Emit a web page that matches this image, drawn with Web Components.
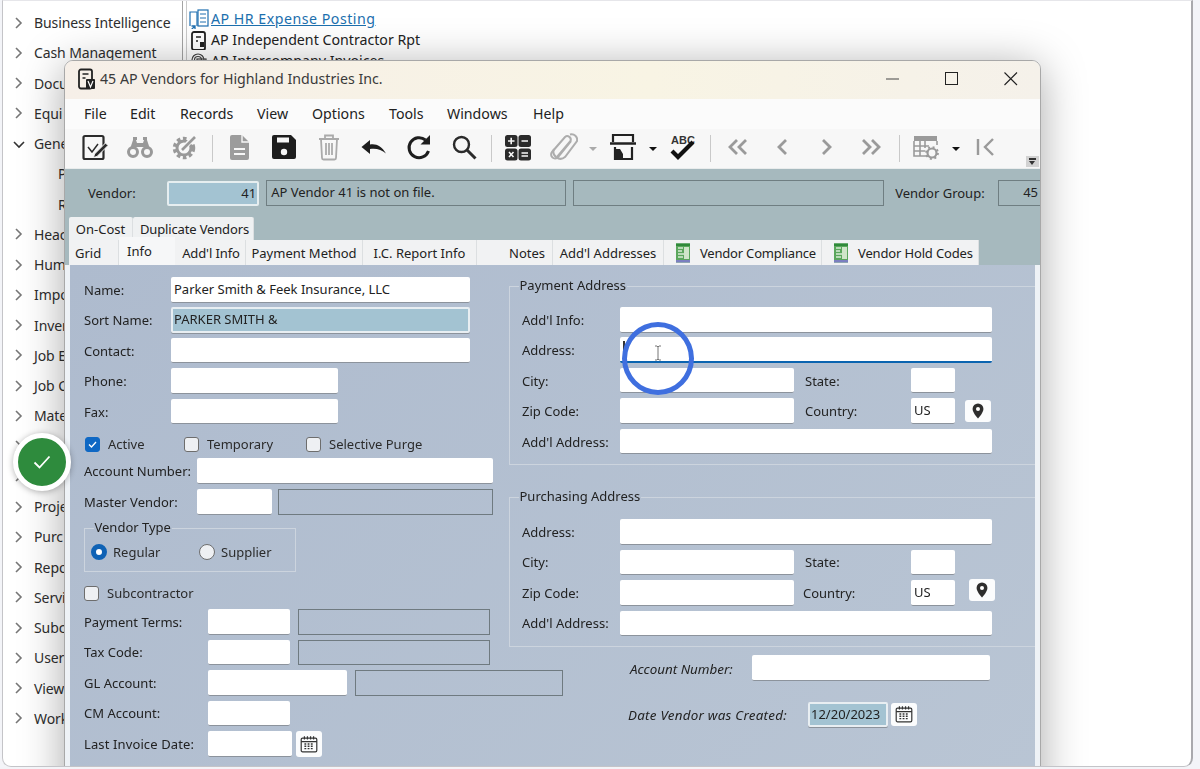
<!DOCTYPE html>
<html>
<head>
<meta charset="utf-8">
<style>
    html,body{margin:0;height:769px;overflow:hidden;background:#f3f4f8;font-family:"Noto Sans","Open Sans",sans-serif;}
</style>
</head>
<body>
<app-stage>
    <tree-list>
        <tree-item wide>Business Intelligence</tree-item>
        <tree-item wide>Cash Management</tree-item>
        <tree-item>Docu</tree-item>
        <tree-item>Equi</tree-item>
        <tree-item open>Gene</tree-item>
        <tree-item leaf>P</tree-item>
        <tree-item leaf>R</tree-item>
        <tree-item>Heac</tree-item>
        <tree-item>Hum</tree-item>
        <tree-item>Impo</tree-item>
        <tree-item>Inver</tree-item>
        <tree-item>Job E</tree-item>
        <tree-item>Job C</tree-item>
        <tree-item>Mate</tree-item>
        <tree-item></tree-item>
        <tree-item></tree-item>
        <tree-item>Proje</tree-item>
        <tree-item>Purc</tree-item>
        <tree-item>Repo</tree-item>
        <tree-item>Servi</tree-item>
        <tree-item>Subc</tree-item>
        <tree-item>User</tree-item>
        <tree-item>View</tree-item>
        <tree-item>Work</tree-item>
    </tree-list>
    <prog-list>
        <prog-item kind="hr" link>AP HR Expense Posting</prog-item>
        <prog-item kind="rpt">AP Independent Contractor Rpt</prog-item>
        <prog-item kind="inv">AP Intercompany Invoices</prog-item>
    </prog-list>

    <app-window title="45 AP Vendors for Highland Industries Inc.">
        <vendor-head></vendor-head>
        <tab-rows></tab-rows>
        <vendor-form>
            <form-col>
                <form-row><form-lbl style="--w:87px">Name:</form-lbl><form-field style="--w:299px">Parker Smith &amp; Feek Insurance, LLC</form-field></form-row>
                <form-row gap><form-lbl style="--w:87px">Sort Name:</form-lbl><form-field kind="teal" style="--w:299px">PARKER SMITH &amp;</form-field></form-row>
                <form-row gap><form-lbl style="--w:87px">Contact:</form-lbl><form-field style="--w:299px"></form-field></form-row>
                <form-row gap><form-lbl style="--w:87px">Phone:</form-lbl><form-field style="--w:167px"></form-field></form-row>
                <form-row gap><form-lbl style="--w:87px">Fax:</form-lbl><form-field style="--w:167px"></form-field></form-row>
                <form-row style="margin-top:10px;height:20px">
                    <form-check checked style="--w:99px;margin-left:1px">Active</form-check>
                    <form-check style="--w:122px">Temporary</form-check>
                    <form-check style="--w:160px">Selective Purge</form-check>
                </form-row>
                <form-row style="margin-top:4px"><form-lbl style="--w:113px">Account Number:</form-lbl><form-field style="--w:296px"></form-field></form-row>
                <form-row style="margin-top:5.5px"><form-lbl style="--w:113px">Master Vendor:</form-lbl><form-field style="--w:75px"></form-field><form-field kind="display" style="--w:215px;margin-left:6px"></form-field></form-row>
                <form-group legend="Vendor Type" style="--w:212px;--top:5px;--bottom:9px;--left:6px;margin-top:4.5px">
                    <form-row style="height:20px">
                        <form-radio checked style="--w:108px">Regular</form-radio>
                        <form-radio style="--w:90px">Supplier</form-radio>
                    </form-row>
                </form-group>
                <form-row style="margin-top:11px;height:20px"><form-check style="--w:140px">Subcontractor</form-check></form-row>
                <form-row style="margin-top:6px"><form-lbl style="--w:124px">Payment Terms:</form-lbl><form-field style="--w:82px"></form-field><form-field kind="display" style="--w:192px;margin-left:8px"></form-field></form-row>
                <form-row gap><form-lbl style="--w:124px">Tax Code:</form-lbl><form-field style="--w:82px"></form-field><form-field kind="display" style="--w:192px;margin-left:8px"></form-field></form-row>
                <form-row gap><form-lbl style="--w:124px">GL Account:</form-lbl><form-field style="--w:139px"></form-field><form-field kind="display" style="--w:208px;margin-left:8px"></form-field></form-row>
                <form-row gap><form-lbl style="--w:124px">CM Account:</form-lbl><form-field style="--w:82px"></form-field></form-row>
                <form-row gap><form-lbl style="--w:124px;letter-spacing:.12px">Last Invoice Date:</form-lbl><form-field style="--w:84px"></form-field><icon-btn icon="cal" style="margin-left:4px"></icon-btn></form-row>
            </form-col>
            <form-col>
                <form-group legend="Payment Address" style="--w:540px;--top:12px;--bottom:10px;--left:12px">
                    <form-row><form-lbl style="--w:98px">Add'l Info:</form-lbl><form-field style="--w:372px"></form-field></form-row>
                    <form-row gap><form-lbl style="--w:98px">Address:</form-lbl><form-field kind="focus" style="--w:372px"><text-caret></text-caret></form-field></form-row>
                    <form-row gap><form-lbl style="--w:98px">City:</form-lbl><form-field style="--w:174px"></form-field><form-lbl style="--w:106px;margin-left:11px">State:</form-lbl><form-field style="--w:44px"></form-field></form-row>
                    <form-row gap><form-lbl style="--w:98px">Zip Code:</form-lbl><form-field style="--w:174px"></form-field><form-lbl style="--w:106px;margin-left:11px">Country:</form-lbl><form-field style="--w:44px">US</form-field><icon-btn icon="pin" style="margin-left:10px;--h:22px"></icon-btn></form-row>
                    <form-row gap><form-lbl style="--w:98px">Add'l Address:</form-lbl><form-field style="--w:372px"></form-field></form-row>
                </form-group>
                <form-group legend="Purchasing Address" style="--w:540px;--top:13px;--bottom:10px;--left:12px;margin-top:23px">
                    <form-row><form-lbl style="--w:98px">Address:</form-lbl><form-field style="--w:372px"></form-field></form-row>
                    <form-row gap><form-lbl style="--w:98px">City:</form-lbl><form-field style="--w:174px"></form-field><form-lbl style="--w:106px;margin-left:11px">State:</form-lbl><form-field style="--w:44px"></form-field></form-row>
                    <form-row gap><form-lbl style="--w:98px">Zip Code:</form-lbl><form-field style="--w:174px"></form-field><form-lbl style="--w:108px;margin-left:9px">Country:</form-lbl><form-field style="--w:44px">US</form-field><icon-btn icon="pin" style="margin:-5px 0 0 14px;--h:22px"></icon-btn></form-row>
                    <form-row gap><form-lbl style="--w:98px">Add'l Address:</form-lbl><form-field style="--w:372px"></form-field></form-row>
                </form-group>
                <form-row style="margin:8px 0 0 121px"><form-lbl em style="--w:122px">Account Number:</form-lbl><form-field style="--w:238px"></form-field></form-row>
                <form-row style="margin:21px 0 0 119px"><form-lbl em style="--w:180px;letter-spacing:.25px">Date Vendor was Created:</form-lbl><form-field kind="teal" style="--w:80px">12/20/2023</form-field><icon-btn icon="cal" style="margin-left:3px;--h:23px"></icon-btn></form-row>
            </form-col>
        </vendor-form>
    </app-window>

    <done-badge></done-badge>
    <focus-ring></focus-ring>
</app-stage>

<script>
    const ICONS = {
        edit: '<rect x="3.5" y="4" width="20" height="23" rx="1.5" fill="none" stroke="#2b2b2b" stroke-width="2.2"/><path d="M8 15l4 5 6-8" fill="none" stroke="#2b2b2b" stroke-width="1.5"/><path d="M14.500 22l-1 3.500 3.500-1 11-11-2.500-2.500z" fill="#2b2b2b" stroke="#f7f7f7" stroke-width="1"/>',
        find: '<g fill="none" stroke="#999" stroke-width="3"><circle cx="8" cy="20" r="4.500"/><circle cx="22" cy="20" r="4.500"/></g><path d="M5 17l3-9h3l1 3h6l1-3h3l3 9-5-2h-10z" fill="#999"/><rect x="8" y="5" width="4" height="3" fill="#999"/><rect x="18" y="5" width="4" height="3" fill="#999"/>',
        gear: '<circle cx="14" cy="16" r="9.500" fill="none" stroke="#999" stroke-width="3.500" stroke-dasharray="3.600 2.600"/><circle cx="14" cy="16" r="7" fill="none" stroke="#999" stroke-width="3"/><path d="M13 17L25 4" stroke="#f7f7f7" stroke-width="5"/><path d="M12 18L25 5" stroke="#999" stroke-width="2.600"/>',
        doc: '<path d="M6 5a2 2 0 012-2h10l7 7v16a2 2 0 01-2 2H8a2 2 0 01-2-2z" fill="#9c9c9c"/><path d="M18 3v7h7" fill="none" stroke="#f7f7f7" stroke-width="1.400"/><path d="M10 17h11M10 22h11" stroke="#f7f7f7" stroke-width="2"/>',
        save: '<path d="M3 5a2 2 0 012-2h17l5 5v17a2 2 0 01-2 2H5a2 2 0 01-2-2z" fill="#1e1e1e"/><rect x="8" y="5.500" width="12" height="5" fill="#f7f7f7"/><circle cx="15" cy="20" r="3.200" fill="#f7f7f7"/>',
        trash: '<g fill="none" stroke="#aaa" stroke-width="1.800"><path d="M5 7h20"/><path d="M11 6V3.500h8V6"/><path d="M7 7l1 19a1.500 1.500 0 001.500 1.500h11a1.500 1.500 0 001.500-1.500l1-19"/><path d="M12 11v12M15 11v12M18 11v12"/></g>',
        undo: '<path d="M2.500 15l8.500-7v4.500c6.500-1 11.500 1.500 16 9-4.500-4-10-5.500-16-4.500v5z" fill="#1e1e1e"/>',
        redo: '<path d="M24.500 19a10 10 0 1 1-3-11" fill="none" stroke="#1e1e1e" stroke-width="3"/><path d="M26 3v9.500h-9.500z" fill="#1e1e1e"/>',
        search: '<circle cx="12.500" cy="12.500" r="7.500" fill="none" stroke="#2b2b2b" stroke-width="2.400"/><path d="M18 18l8.500 8.500" stroke="#2b2b2b" stroke-width="3"/>',
        calc: '<g fill="#2b2b2b"><rect x="2" y="3" width="12.500" height="12" rx="2.500"/><rect x="15.500" y="3" width="12.500" height="12" rx="2.500"/><rect x="2" y="16.500" width="12.500" height="12" rx="2.500"/><rect x="15.500" y="16.500" width="12.500" height="12" rx="2.500"/></g><path d="M5 9h6.500M8.200 5.800v6.500M18.500 9h6.500M6 20l4.500 5M10.500 20l-4.500 5M18.500 21h6.500M18.500 24h6.500" stroke="#f7f7f7" stroke-width="1.600"/>',
        clip: '<path d="M26 8L13 24a3.800 3.800 0 01-6-5L20 4a3.500 3.500 0 015.500 4L12 24" fill="none" stroke="#adadad" stroke-width="2" transform="translate(-3 1)"/><path d="M22 2.500a5.500 5.500 0 017 6.500L17 25a7 7 0 01-11 -8" fill="none" stroke="#adadad" stroke-width="2"/>',
        print: '<path d="M5 10V3h20v7" fill="none" stroke="#222" stroke-width="2.200"/><path d="M2 11.500h26" stroke="#222" stroke-width="2.600"/><path d="M7 15v12h17V15" fill="none" stroke="#222" stroke-width="2.200"/><path d="M6 17h6l3 5v6H8a2 2 0 01-2-2z" fill="#222"/>',
        abc: '<text x="15" y="11.500" text-anchor="middle" font-family="Liberation Sans" font-weight="700" font-size="11" fill="#333">ABC</text><path d="M4 19l6 6L25 10" fill="none" stroke="#111" stroke-width="4.200"/>',
        first: '<path d="M15 8l-7 7 7 7M24 8l-7 7 7 7" fill="none" stroke="#9a9a9a" stroke-width="2.800"/>',
        prev: '<path d="M19 8l-7 7 7 7" fill="none" stroke="#9a9a9a" stroke-width="2.800"/>',
        next: '<path d="M11 8l7 7-7 7" fill="none" stroke="#9a9a9a" stroke-width="2.800"/>',
        last: '<path d="M6 8l7 7-7 7M15 8l7 7-7 7" fill="none" stroke="#9a9a9a" stroke-width="2.800"/>',
        grid: '<g fill="none" stroke="#9a9a9a" stroke-width="1.600"><path d="M3 9v15h15M3 14h15M3 19h11M9 9v15M14 9v7M26 9v4"/></g><rect x="3" y="4" width="23" height="5" fill="#9a9a9a"/><circle cx="21" cy="21" r="4.500" fill="#f7f7f7" stroke="#9a9a9a" stroke-width="2.200"/><circle cx="21" cy="21" r="6" fill="none" stroke="#9a9a9a" stroke-width="1.800" stroke-dasharray="2 2.700"/>',
        begin: '<path d="M7 7v16" stroke="#9a9a9a" stroke-width="2.400"/><path d="M22 7l-8 8 8 8" fill="none" stroke="#9a9a9a" stroke-width="2.400"/>',
        cal: '<g fill="none" stroke="#333" stroke-width="1.300"><rect x="3.500" y="5.500" width="17" height="15" rx="1.500"/><path d="M3.500 9.500h17M7 3.500v3.500M10.300 3.500v3.500M13.700 3.500v3.500M17 3.500v3.500"/></g><path d="M7 12h10M7 14.500h10M7 17h10" stroke="#333" stroke-width="1.500" stroke-dasharray="2 1.500"/>',
        pin: '<path d="M12 3a6.500 6.500 0 00-6.500 6.500C5.500 14 12 21 12 21s6.500-7 6.500-11.500A6.500 6.500 0 0012 3z" fill="#2d2d2d"/><circle cx="12" cy="9.500" r="2.400" fill="#fff"/>',
        hr: '<path d="M1 17V3h7v14" fill="none" stroke="#1f6fb0" stroke-width="1.200"/><rect x="9" y="1" width="10" height="16" fill="none" stroke="#1f6fb0" stroke-width="1.200"/><path d="M11 5h6M11 9h6M11 13h6" stroke="#1f6fb0"/><path d="M1 22l5-5M2.500 17H6v3.500" fill="none" stroke="#1f6fb0" stroke-width="1.300"/>',
        rpt: '<rect x="3" y="2" width="13" height="18" rx="2" fill="none" stroke="#222" stroke-width="1.800"/><path d="M7 7h5M7 11h2" stroke="#222" stroke-width="1.600"/><rect x="11" y="12" width="4" height="5" fill="#222"/>',
        inv: '<g fill="none" stroke="#444" stroke-width="1.200"><circle cx="9" cy="9" r="6"/><circle cx="9" cy="9" r="3.500"/><rect x="8" y="8" width="9" height="12"/></g>',
        title: '<rect x="2" y="1.500" width="13" height="19" rx="2" fill="none" stroke="#222" stroke-width="1.800"/><path d="M5.500 6h6M5.500 10h3" stroke="#222" stroke-width="1.500"/><rect x="9" y="11" width="9" height="10" rx="1" fill="#222"/><path d="M11 13l2.500 6 2.500-6" fill="none" stroke="#fff" stroke-width="1.200"/>',
        leaf: '<rect x="1" y="0.500" width="14" height="19" fill="#5aa65c"/><rect x="1" y="0.500" width="14" height="2.500" fill="#2f8a3a"/><rect x="1" y="17" width="14" height="2.500" fill="#7b7fc0"/><path d="M3 5h5M3 8h4M3 11h6M3 14h5" stroke="#d7ecd5" stroke-width="1.400"/><rect x="9" y="4" width="5" height="12" fill="#cfe5c9"/>'
    }

    function icon(name, size, box) {
        return `<svg width="${size}" height="${size}" viewBox="0 0 ${box} ${box}">${ICONS[name]}</svg>`
    }

    // small helper so each element keeps its own style and markup in an open shadow root
    function define(tag, css, html) {
        customElements.define(tag, class extends HTMLElement {
            constructor() {
                super()
                this.attachShadow({ mode: 'open' }).innerHTML = `<style>${css}</style>${typeof html == 'function' ? html(this) : html}`
            }
        })
    }

    define('app-stage', `
        :host{display:flex;position:relative;width:1191px;height:767px;box-sizing:border-box;margin-left:2px;
            background:#fff;border:1px solid #c4c4c8;border-right:2px solid #a9a9ad;border-top-color:#e6e6ea;border-radius:0 0 9px 9px;overflow:hidden;
            filter:blur(.4px)}
    `, '<slot></slot>')

    define('tree-list', `:host{display:block;width:179px;padding-top:6.500px;flex:none}`, '<slot></slot>')

    define('tree-item', `
        :host{display:flex;align-items:center;height:30.250px;font-size:14px;letter-spacing:-.1px;color:#2e2e2e;white-space:nowrap}
        :host([leaf]){padding-left:55px}
        svg{margin:0 9px 0 10px;flex:none}
    `, el => {
        if (el.hasAttribute('leaf')) return '<slot></slot>'
        const d = el.hasAttribute('open') ? 'M1 4l5 5 5-5' : 'M3 1l5 5-5 5'
        const st = el.hasAttribute('open') ? '#333' : '#777'
        return `<svg width="12" height="12" viewBox="0 0 12 12"><path d="${d}" fill="none" stroke="${st}" stroke-width="1.600"/></svg><slot></slot>`
    })

    define('prog-list', `
        :host{display:block;flex:1;margin-top:7px;border-left:1px solid #a4a4a4;padding:0 0 0 6px;position:relative}
        i{display:block;position:absolute;left:-1px;top:-7px;width:1px;height:7px;background:#a4a4a4}
        b{display:block;position:absolute;left:3px;top:-7px;width:1px;height:60px;background:#c9c9c9}
    `, '<i></i><b></b><slot></slot>')

    define('prog-item', `
        :host{display:flex;align-items:center;height:21px;font-size:14.200px;color:#222;white-space:nowrap}
        :host([link]){color:#1c6fae;text-decoration:underline;letter-spacing:.5px}
        svg{margin-right:2px;flex:none}
    `, el => icon(el.getAttribute('kind'), 20, 20) + '<slot></slot>')

    define('app-window', `
        :host{display:block;position:absolute;left:61px;top:59px;width:977px;height:760px;box-sizing:border-box;
            border:1px solid #a8a8a8;border-radius:9px 9px 0 0;background:#eef2f6;box-shadow:0 6px 44px rgba(0,0,0,.34);color:#222;overflow:hidden}
        .title{display:flex;align-items:center;height:38px;padding-left:12px;box-sizing:border-box;padding-bottom:3px;font-size:14.200px;color:#3a3a3a;
            background:linear-gradient(90deg,#f6efe8,#f8f4e4 60%,#f5f1ea)}
        .title svg.t{margin-right:1px}
        .title span{flex:1}
        .ctl{width:60px;display:flex;justify-content:center}
        .menu{display:flex;height:30px;box-sizing:border-box;padding-bottom:2px;align-items:center;background:#fbfbfb;font-size:14.200px;color:#222;padding-left:19px}
        .menu span{display:block}
        .bar{display:flex;height:40px;align-items:center;background:#f7f7f7;padding-left:7.500px;position:relative;border-bottom:1px solid #e9ecec;box-sizing:border-box}
        .over{position:absolute;right:1px;bottom:1px;width:13px;height:11px;background:#d2d2d2}
        .over:before{content:"";position:absolute;left:3px;top:2px;width:7px;height:1.500px;background:#333}
        .over:after{content:"";position:absolute;left:3px;top:5px;border:3.500px solid transparent;border-top:4px solid #333}
    `, el => `
        <div class=title>
            <svg class=t width="22" height="22" viewBox="0 0 22 22">${ICONS.title}</svg>
            <span>${el.getAttribute('title')}</span>
            <div class=ctl style="padding-left:3px;width:57px"><svg width="14" height="14"><path d="M0 7h13" stroke="#444"/></svg></div>
            <div class=ctl style="padding-left:1px;width:59px"><svg width="14" height="14"><rect x=".5" y=".5" width="12" height="12" fill="none" stroke="#222" stroke-width="1"/></svg></div>
            <div class=ctl style="margin-right:-1px"><svg width="14" height="14"><path d="M.5 .5l12.500 12.500M13 .5L.5 13" stroke="#222" stroke-width="1.100"/></svg></div>
        </div>
        <div class=menu>
            <span style="width:46px">File</span><span style="width:50px">Edit</span><span style="width:77px">Records</span><span style="width:55px">View</span><span style="width:77px">Options</span><span style="width:58px">Tools</span><span style="width:86px">Windows</span><span>Help</span>
        </div>
        <div class=bar>
            <tool-btn icon="edit"></tool-btn><tool-btn icon="find"></tool-btn><tool-btn icon="gear"></tool-btn><tool-sep></tool-sep>
            <tool-btn icon="doc"></tool-btn><tool-btn icon="save"></tool-btn><tool-btn icon="trash"></tool-btn><tool-btn icon="undo"></tool-btn><tool-btn icon="redo"></tool-btn><tool-btn icon="search"></tool-btn><tool-sep></tool-sep>
            <tool-btn icon="calc"></tool-btn><tool-btn icon="clip"></tool-btn><tool-caret dim></tool-caret><tool-btn icon="print"></tool-btn><tool-caret></tool-caret><tool-btn icon="abc"></tool-btn><tool-sep></tool-sep>
            <tool-btn icon="first"></tool-btn><tool-btn icon="prev"></tool-btn><tool-btn icon="next"></tool-btn><tool-btn icon="last"></tool-btn><tool-sep></tool-sep>
            <tool-btn icon="grid"></tool-btn><tool-caret></tool-caret><tool-btn icon="begin"></tool-btn>
            <div class=over></div>
        </div>
        <slot></slot>
    `)

    define('tool-btn', `:host{display:flex;width:45px;height:36px;margin-bottom:3px;align-items:center;justify-content:center;flex:none}`,
        el => icon(el.getAttribute('icon'), 30, 30))
    define('tool-sep', `:host{display:block;width:9px;flex:none}div{width:1px;height:27px;background:#c9c9c9;margin:0 auto}`, '<div></div>')
    define('tool-caret', `
        :host{display:flex;width:15px;height:40px;align-items:center;justify-content:center;flex:none}
        i{display:block;margin-top:1px;border:4px solid transparent;border-top:4px solid #111;border-bottom:0}
        :host([dim]) i{border-top-color:#aaa}
    `, '<i></i>')

    define('vendor-head', `
        :host{display:flex;align-items:center;height:26px;background:#a6b9be;padding:11px 0 11px 23px;font-size:13px;color:#222;white-space:nowrap}
        .lbl{width:80px}
        .key{width:93px;height:25px;box-sizing:border-box;background:#a3c3d2;border:2px solid #e6eef0;text-align:right;line-height:21px;padding-right:1px;border-radius:2px}
        .d{height:26px;box-sizing:border-box;border:1.500px solid #6f7e82;line-height:23px;padding-left:4px;flex:none}
    `, `
        <div class=lbl>Vendor:</div>
        <div class=key>41</div>
        <div class=d style="margin-left:7px;width:300px">AP Vendor 41 is not on file.</div>
        <div class=d style="margin-left:7px;width:311px"></div>
        <div style="margin-left:11px;width:104px">Vendor Group:</div>
        <div class=d style="width:42px;text-align:right;padding-right:2px;border-right:0">45</div>
    `)

    define('tab-rows', `
        :host{display:block;background:#a6b9be;padding-left:4px;height:48px;font-size:13px;color:#222;white-space:nowrap}
        .r{display:flex}
        .r1{height:23px}
        .r2{height:25px;width:910px;background:#f1f2f3}
    `, `
        <div class="r r1"><tab-item style="--w:64px" up>On-Cost</tab-item><tab-item style="--w:121px;letter-spacing:-.15px;padding-left:3px" up>Duplicate Vendors</tab-item></div>
        <div class="r r2">
            <tab-item style="--w:50px;justify-content:flex-start;padding-left:6px">Grid</tab-item><tab-item style="--w:56px;justify-content:flex-start;padding-left:8px" active>Info</tab-item><tab-item style="--w:69px;margin-left:2px;letter-spacing:-.1px">Add'l Info</tab-item><tab-item style="--w:117px">Payment Method</tab-item><tab-item style="--w:114px">I.C. Report Info</tab-item><tab-item style="--w:76px;justify-content:flex-end;padding-right:7px"><span>Notes</span></tab-item><tab-item style="--w:111px">Add'l Addresses</tab-item><tab-item style="--w:158px;letter-spacing:-.2px" badge>Vendor Compliance</tab-item><tab-item style="--w:157px;letter-spacing:-.15px" badge>Vendor Hold Codes</tab-item>
        </div>
    `)

    define('tab-item', `
        :host{display:flex;align-items:center;justify-content:center;width:var(--w);height:25px;box-sizing:border-box;background:#f1f2f3;border-right:1px solid #dcdfe1;flex:none}
        :host([up]){height:23px;background:#eff1f2;border-radius:2px 2px 0 0}
        :host([active]){background:#f6f7f8;height:28px;margin-top:-3px;position:relative;border:0;padding-bottom:1px;box-sizing:border-box}
        :host([badge]){justify-content:flex-start;padding-left:11px}
        svg{margin-right:9px}
    `, el => (el.hasAttribute('badge') ? `<svg width="16" height="20" viewBox="0 0 16 20">${ICONS.leaf}</svg>` : '') + '<slot></slot>')

    define('vendor-form', `
        :host{display:grid;grid-template-columns:425px 1fr;margin:0 5px;width:965px;height:503px;box-sizing:border-box;padding:12px 0 0 14px;
            background:linear-gradient(135deg,#aebbce,#b9c5d4);overflow:hidden;font-size:13px;color:#222;white-space:nowrap}
    `, '<slot></slot>')

    define('form-col', `:host{display:block;min-width:0}`, '<slot></slot>')

    define('form-row', `
        :host{display:flex;align-items:center;height:25.500px}
        :host([gap]){margin-top:4.950px}
    `, '<slot></slot>')

    define('form-lbl', `
        :host{display:block;width:var(--w);flex:none}
        :host([em]){font-style:italic;font-size:13.400px;padding-top:2px}
    `, '<slot></slot>')

    define('form-field', `
        :host{display:block;width:var(--w);height:25.500px;box-sizing:border-box;flex:none;background:#fff;border-radius:2px;
            border-bottom:1.500px solid #8c939c;padding-left:3px;line-height:24px;color:#222;position:relative}
        :host([kind=teal]){background:#a3c3d2;border:2px solid #e8eef2;box-shadow:0 1px 0 #8c939c;padding-left:1px;line-height:20px}
        :host([kind=display]){background:transparent;border:1.500px solid #6f7a80;border-radius:0}
        :host([kind=focus]){border-bottom:2px solid #0a64b0}
    `, '<slot></slot>')

    define('text-caret', `:host{display:block;position:absolute;left:3px;top:4px;width:1.500px;height:17px;background:#333}`, '')

    define('form-group', `
        :host{display:block;width:var(--w);box-sizing:border-box}
        fieldset{margin:0;padding:var(--top) 0 var(--bottom) var(--left);border:1px solid #ccd4de;min-width:0}
        legend{margin-left:calc(8.500px - var(--left));padding:0 1px;height:18px;line-height:17px;color:#222}
    `, el => `<fieldset><legend>${el.getAttribute('legend')}</legend><slot></slot></fieldset>`)

    define('form-check', `
        :host{display:flex;align-items:center;width:var(--w);flex:none;color:#2b2b2b}
        i{display:block;width:15px;height:15px;box-sizing:border-box;border:1px solid #6d6d6d;border-radius:3px;background:#eef0f3;margin-right:8px;flex:none}
        i svg{display:none}
        :host([checked]) i{background:#0f68c4;border-color:#0f68c4}
        :host([checked]) i svg{display:block}
    `, `<i><svg width="13" height="13"><path d="M3 6.500l2.500 2.500 4.500-5" fill="none" stroke="#fff" stroke-width="1.300"/></svg></i><slot></slot>`)

    define('form-radio', `
        :host{display:flex;align-items:center;width:var(--w);flex:none;color:#2b2b2b}
        i{display:block;width:16px;height:16px;box-sizing:border-box;border:1px solid #6d6d6d;border-radius:50%;background:#eef0f3;margin-right:6px;flex:none}
        :host([checked]) i{border:5px solid #0f62b5;background:#fff}
    `, '<i></i><slot></slot>')

    define('icon-btn', `
        :host{display:flex;align-items:center;justify-content:center;width:26px;height:var(--h,26px);background:#fbfcfd;border-radius:3px;flex:none}
    `, el => icon(el.getAttribute('icon'), el.getAttribute('icon') == 'pin' ? 20 : 22, 24))

    define('done-badge', `
        :host{display:flex;align-items:center;justify-content:center;position:absolute;left:10px;top:432px;width:48px;height:48px;
            background:#2e8b3d;border:5px solid #fff;border-radius:50%;box-shadow:0 1px 6px rgba(0,0,0,.3)}
    `, '<svg width="20" height="20" viewBox="0 0 20 20"><path d="M2.500 10.500l5 5 10-11" fill="none" stroke="#fff" stroke-width="1.800"/></svg>')

    define('focus-ring', `
        :host{display:block;position:absolute;left:619px;top:321px;width:72px;height:73px;box-sizing:border-box;border:5px solid #3f6fdf;border-radius:50%}
        svg{position:absolute;left:26px;top:18px}
    `, '<svg width="10" height="16" viewBox="0 0 10 16"><path d="M2 1h2l1 1 1-1h2M5 2v12M2 15h2l1-1 1 1h2" fill="none" stroke="#777" stroke-width="1"/></svg>')
</script>
</body>
</html>
